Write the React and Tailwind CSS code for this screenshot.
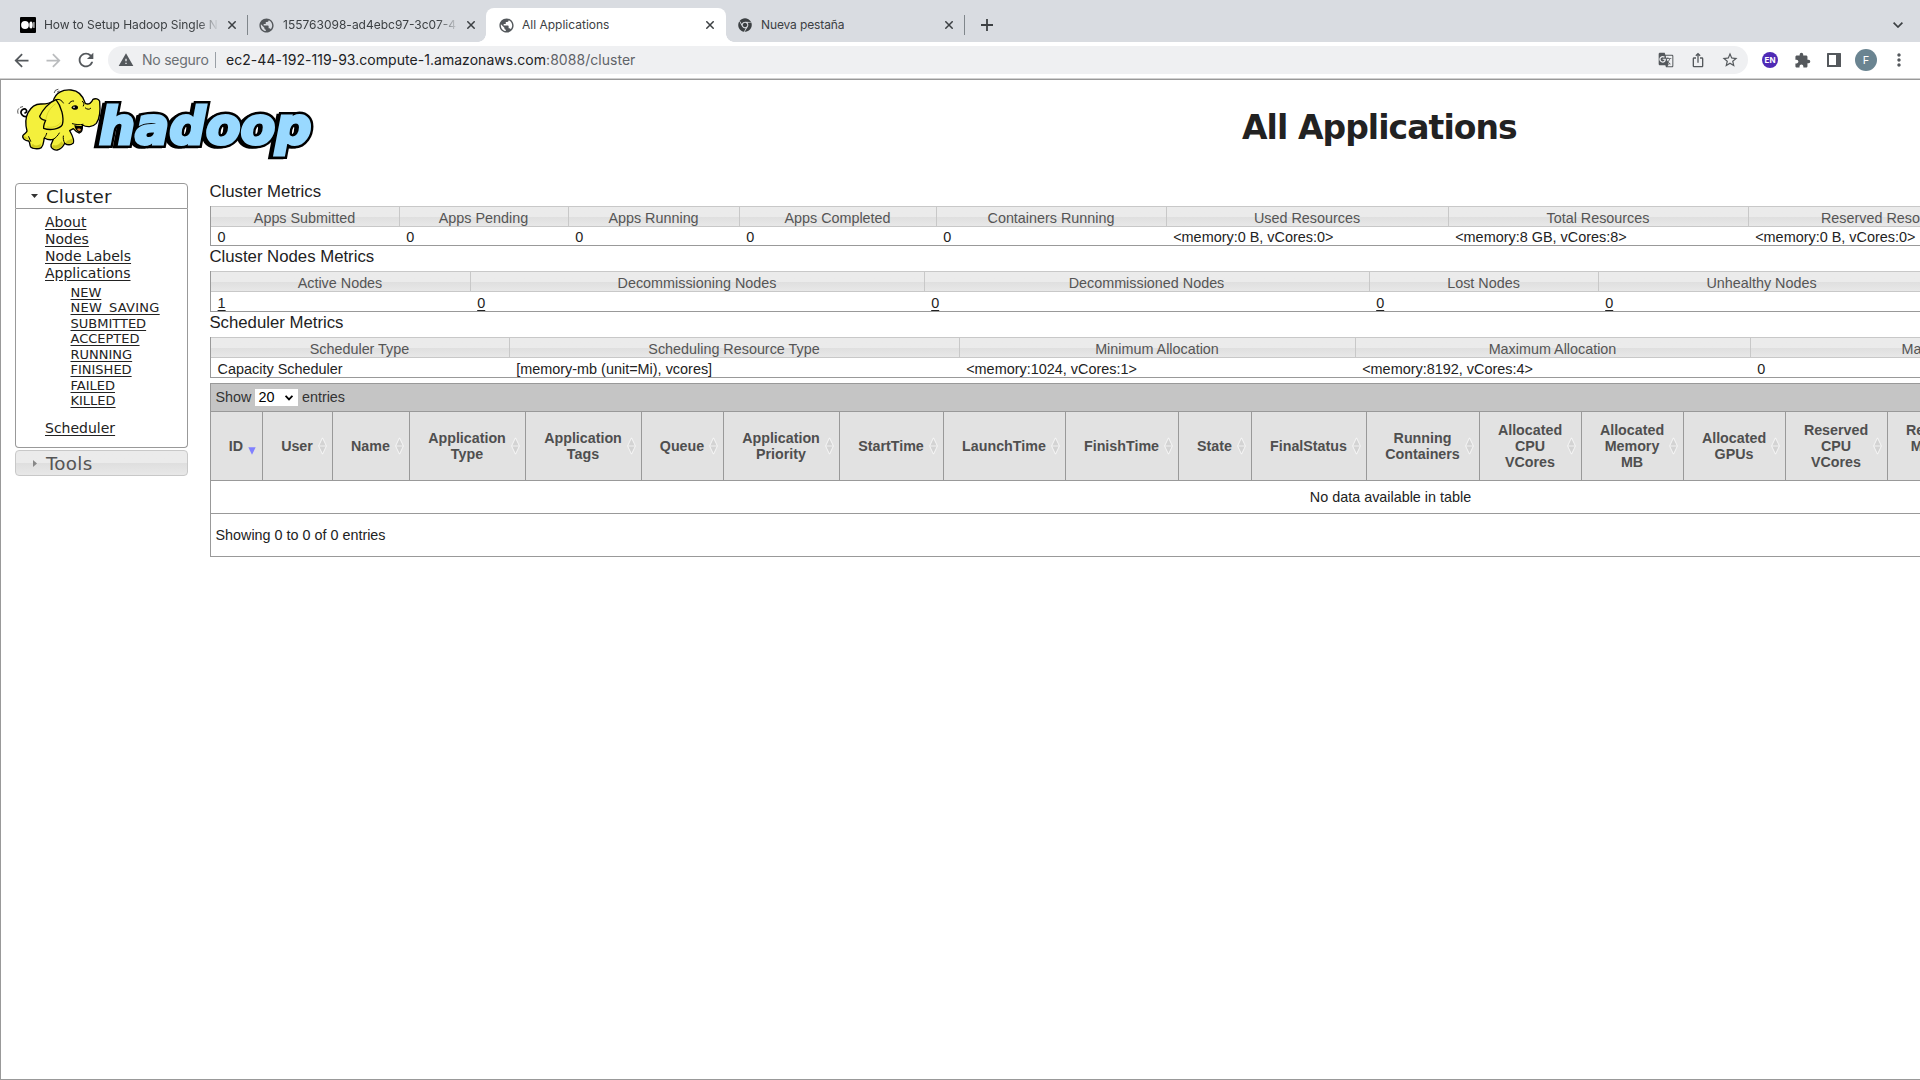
import React from "react";
import {
  MdExtension,
  MdStarBorder,
  MdWarning,
  MdRefresh,
  MdArrowBack,
  MdArrowForward,
  MdPublic,
  MdMoreVert,
  MdOutlineIosShare,
  MdGTranslate,
} from "react-icons/md";
import { FaChrome } from "react-icons/fa";

const CloseIcon = ({ className }) => (
  <svg className={className} width="8" height="8" viewBox="0 0 8 8" fill="none" stroke="#3c4043" strokeWidth="1.5">
    <path d="M0.3 0.3L7.7 7.7M7.7 0.3L0.3 7.7" />
  </svg>
);

const MediumIcon = () => (
  <svg width="16" height="16" viewBox="0 0 16 16">
    <rect width="16" height="16" rx="1" fill="#000" />
    <circle cx="5" cy="8" r="3.9" fill="#fff" />
    <ellipse cx="11" cy="8" rx="1.7" ry="3.5" fill="#fff" />
    <rect x="13.3" y="5" width="1.2" height="6" rx="0.6" fill="#ddd" />
  </svg>
);

const tabText = "h-5 whitespace-nowrap overflow-hidden text-[12px] leading-5 text-[#3c4043]";
const fade = "[mask-image:linear-gradient(to_right,black_88%,transparent)]";

function TabStrip() {
  return (
    <div className="flex h-[42px] bg-[#d9dce1] pt-2">
      <div className="flex h-[34px] w-[247px] items-center pl-5">
        <MediumIcon />
        <span className={`ml-2 w-[175px] ${tabText} ${fade} tracking-[-0.06px]`}>How to Setup Hadoop Single N</span>
        <CloseIcon className="ml-auto mr-[11px]" />
      </div>
      <div className="mt-[7px] h-5 w-px bg-[#80868b]" />
      <div className="flex h-[34px] w-[238px] items-center pl-[10px]">
        <MdPublic className="size-[17px] text-[#54585c]" />
        <span className={`ml-2 w-[176px] ${tabText} ${fade}`}>155763098-ad4ebc97-3c07-4</span>
        <CloseIcon className="ml-auto mr-[11px]" />
      </div>
      <div className="relative flex h-[34px] w-[240px] items-center rounded-t-lg bg-white pl-[12px]">
        <div className="absolute -left-2 bottom-0 size-2 bg-[radial-gradient(circle_at_0_0,#d9dce1_7.5px,white_8px)]" />
        <div className="absolute -right-2 bottom-0 size-2 bg-[radial-gradient(circle_at_100%_0,#d9dce1_7.5px,white_8px)]" />
        <MdPublic className="size-[17px] text-[#54585c]" />
        <span className={`ml-[7px] ${tabText}`}>All Applications</span>
        <CloseIcon className="ml-auto mr-[12px]" />
      </div>
      <div className="flex h-[34px] w-[238px] items-center pl-[12px]">
        <FaChrome className="size-[14px] text-[#3c4043]" />
        <span className={`ml-[9px] ${tabText} tracking-[-0.12px]`}>Nueva pestaña</span>
        <CloseIcon className="ml-auto mr-[11px]" />
      </div>
      <div className="mt-[7px] h-5 w-px bg-[#80868b]" />
      <svg className="ml-4 mt-[11px]" width="12" height="12" viewBox="0 0 12 12" stroke="#3c4043" strokeWidth="1.8">
        <path d="M6 0V12M0 6H12" />
      </svg>
      <svg className="ml-auto mr-[17px] mt-[14px]" width="10" height="6" viewBox="0 0 10 6" fill="none" stroke="#3c4043" strokeWidth="1.7">
        <path d="M0.6 0.6L5 5L9.4 0.6" />
      </svg>
    </div>
  );
}

function Toolbar() {
  return (
    <div className="flex h-9 items-center bg-white">
      <MdArrowBack className="ml-[11px] size-[21px] text-[#54585c]" />
      <MdArrowForward className="ml-[11px] size-[21px] text-[#babcbe]" />
      <MdRefresh className="ml-[11px] size-[22px] text-[#54585c]" />
      <div className="ml-[11px] flex h-7 w-[1640px] items-center rounded-full bg-[#eff0f2] pl-[10px] text-[14px] leading-5 tracking-[0.04px]">
        <MdWarning className="size-4 text-[#54585c]" />
        <span className="ml-[8px] w-[67px] whitespace-nowrap tracking-[-0.24px] text-[#6b6f73]">No seguro</span>
        <div className="ml-[6px] h-4 w-px bg-[#9aa0a6]" />
        <span className="ml-[10px] text-[#202124]">
          ec2-44-192-119-93.compute-1.amazonaws.com<span className="text-[#5f6368]">:8088/cluster</span>
        </span>
        <div className="ml-auto flex items-center text-[#54585c]">
          <MdGTranslate className="size-[16px]" />
          <MdOutlineIosShare className="ml-[16px] size-[16px]" />
          <MdStarBorder className="ml-[15px] mr-[9px] size-[18px]" />
        </div>
      </div>
      <div className="ml-[14px] grid size-4 place-items-center rounded-full bg-[#4f2ab5] text-[8px] font-bold leading-none text-white">EN</div>
      <MdExtension className="ml-[16px] size-[17px] text-[#54585c]" />
      <svg className="ml-[16px]" width="14" height="14" viewBox="0 0 14 14">
        <rect width="14" height="14" rx="0.5" fill="#54585c" />
        <rect x="2" y="2" width="7" height="10" fill="#fff" />
      </svg>
      <div className="ml-[14px] grid size-[22px] place-items-center rounded-full bg-[#6a8491] text-[11px] leading-none text-white">F</div>
      <MdMoreVert className="ml-[12px] size-5 text-[#54585c]" />
    </div>
  );
}

function HadoopLogo() {
  const word = {
    textLength: 638,
    lengthAdjust: "spacingAndGlyphs",
    fontSize: 157,
    fontWeight: 700,
    fontStyle: "italic",
    fontFamily: '"DejaVu Sans", sans-serif',
    strokeLinejoin: "miter",
  };
  return (
    <svg className="block" width="320" height="85" viewBox="3 12 960 255">
      <text x="288" y="206" fill="#000" stroke="#000" strokeWidth="20" {...word}>hadoop</text>
      <text x="297" y="205" fill="#000" stroke="#000" strokeWidth="24" {...word}>hadoop</text>
      <text x="297" y="205" fill="#99d9ff" stroke="#99d9ff" strokeWidth="9" {...word}>hadoop</text>
      <g stroke="#000" strokeWidth="4" strokeLinejoin="round" strokeLinecap="round">
        <path fill="none" strokeWidth="5" d="M84 121C68 126 57 110 67 101C77 95 86 106 75 111" />
        <path fill="none" strokeWidth="2" d="M54 112C52 106 53 101 56 98M61 94L68 92M163 50L166 43L174 40M172 48L177 45" />
        <path
          fill="#f4f03c"
          d="M160 75C166 50 188 40 213 42C237 44 250 62 256 82C266 88 275 80 279 70C286 66 296 69 299 76C301 98 302 124 289 142C278 154 260 154 247 147C248 158 246 168 238 171C229 168 224 163 220 158L209 164C216 177 224 190 220 201C212 208 202 207 194 202C190 211 183 220 172 222C160 224 151 214 153 206L160 190C150 193 140 190 133 186C130 196 132 206 124 215C114 221 97 218 92 213C88 207 91 200 86 195C76 194 65 187 69 178C74 172 80 170 81 165C77 150 75 128 84 110C93 93 108 83 125 84C136 84 150 82 160 75Z"
        />
        <path fill="#cfc91f" stroke="none" d="M98 203C106 211 116 210 123 202L122 213C113 217 98 216 94 210ZM160 207C169 211 178 206 184 196L191 203C182 219 165 222 156 214ZM200 195L216 188C219 193 219 198 216 201C210 205 202 203 198 201ZM74 180L86 190C80 191 73 188 72 183Z" />
        <path fill="none" strokeWidth="3" d="M160 190C168 185 174 178 178 171M194 202C190 194 189 186 190 180M92 196L86 182M133 186C137 180 139 176 140 172" />
        <path fill="#f4f03c" d="M168 71C145 80 127 103 119 121C121 128 129 132 137 133C133 142 130 150 131 157C150 164 179 160 187 146C193 124 184 91 168 71Z" />
        <path fill="none" stroke="#d8d226" strokeWidth="3" d="M166 84C151 94 140 112 138 130M182 140C175 152 155 156 142 153" />
        <path fill="none" strokeWidth="3" d="M168 71C177 68 185 72 190 81M207 83C210 77 216 74 221 75M247 76C252 79 253 84 250 90M256 96C262 101 268 101 272 97M217 143C228 146 240 147 249 145" />
        <path fill="#000" stroke="none" d="M214 95C219 86 228 86 234 92C235 98 231 102 225 101C220 101 217 99 214 95Z" />
        <circle cx="222" cy="94" r="2.5" fill="#fff" stroke="none" />
        <path fill="#000" stroke="none" d="M223 147C231 150 241 151 247 149C249 158 245 167 238 169C229 166 224 157 223 147Z" />
        <path fill="#e78a35" stroke="none" d="M231 159C236 156 242 158 243 161C240 167 235 166 231 159Z" />
      </g>
    </svg>
  );
}

const sideLink = "block w-fit text-[14px] leading-[17px] underline underline-offset-2";
const states = ["NEW", "NEW_SAVING", "SUBMITTED", "ACCEPTED", "RUNNING", "FINISHED", "FAILED", "KILLED"];

function Sidebar() {
  return (
    <div className="ml-[14px] mt-[3px] w-[173px] shrink-0 font-['DejaVu_Sans',sans-serif] text-[#222]">
      <div className="flex h-[26px] items-center rounded-t border border-[#999] text-[18.3px] leading-6">
        <svg className="ml-[15px]" width="7" height="4" viewBox="0 0 7 4">
          <path d="M0 0H7L3.5 4Z" fill="#333" />
        </svg>
        <span className="ml-[8px] mt-[2px] tracking-[0.1px]">Cluster</span>
      </div>
      <div className="h-[239px] rounded-b border border-t-0 border-[#999] pl-[29px] pt-[5px]">
        <a className={sideLink}>About</a>
        <a className={sideLink}>Nodes</a>
        <a className={sideLink}>Node Labels</a>
        <a className={sideLink}>Applications</a>
        <div className="ml-[25.5px] mt-[3px]">
          {states.map((s) => (
            <a
              key={s}
              className={`block w-fit text-[13px] leading-[15.45px] underline underline-offset-2 ${s === "NEW_SAVING" ? "tracking-[0.28px]" : ""}`}
            >
              {s}
            </a>
          ))}
        </div>
        <a className={`mt-[11px] ${sideLink}`}>Scheduler</a>
      </div>
      <div className="mt-[2px] flex h-[26px] items-center rounded border border-[#c8c8c8] bg-linear-to-b from-[#ebebeb] from-50% via-[#dfdfdf] via-52% to-[#e8e8e8] text-[18.3px] leading-6 text-[#555]">
        <svg className="ml-[17px]" width="4" height="7" viewBox="0 0 4 7">
          <path d="M0 0V7L4 3.5Z" fill="#888" />
        </svg>
        <span className="ml-[9px] mt-[2px] tracking-[0.3px]">Tools</span>
      </div>
    </div>
  );
}

function MetricsTable({ title, cols, tall }) {
  return (
    <section>
      <h3 className="-ml-[0.6px] h-[25px] pt-px text-[16.75px] leading-[19px]">{title}</h3>
      <div className="border-l border-[#999]">
        <div className="flex h-[21px] border-y border-[#c8c8c8] bg-linear-to-b from-[#ebebeb] from-50% via-[#dfdfdf] via-52% to-[#e8e8e8] text-center text-[14.37px] leading-[22px] text-[#555]">
          {cols.map(([name, , width], i) => (
            <div key={name} className={`shrink-0 whitespace-nowrap pr-px ${i ? "border-l border-[#c8c8c8]" : ""}`} style={{ width }}>
              {name}
            </div>
          ))}
        </div>
        <div className={`flex border-b border-[#999] text-[14.43px] ${tall ? "h-5 leading-[23px]" : "h-[19px] leading-5"}`}>
          {cols.map(([name, value, width, link], i) => (
            <div key={name} className={`shrink-0 whitespace-nowrap ${i ? "pl-[7.2px]" : "pl-[6.6px]"}`} style={{ width }}>
              <span className={link ? "underline underline-offset-2" : ""}>{value}</span>
            </div>
          ))}
        </div>
      </div>
    </section>
  );
}

const clusterMetrics = [
  ["Apps Submitted", "0", 188],
  ["Apps Pending", "0", 169],
  ["Apps Running", "0", 171],
  ["Apps Completed", "0", 197],
  ["Containers Running", "0", 230],
  ["Used Resources", "<memory:0 B, vCores:0>", 282],
  ["Total Resources", "<memory:8 GB, vCores:8>", 300],
  ["Reserved Resources", "<memory:0 B, vCores:0>", 280],
];

const nodeMetrics = [
  ["Active Nodes", "1", 259, true],
  ["Decommissioning Nodes", "0", 454, true],
  ["Decommissioned Nodes", "0", 445, true],
  ["Lost Nodes", "0", 229, true],
  ["Unhealthy Nodes", "0", 327, true],
];

const schedulerMetrics = [
  ["Scheduler Type", "Capacity Scheduler", 298],
  ["Scheduling Resource Type", "[memory-mb (unit=Mi), vcores]", 450],
  ["Minimum Allocation", "<memory:1024, vCores:1>", 396],
  ["Maximum Allocation", "<memory:8192, vCores:4>", 395],
  ["Maximum Cluster Application Priority", "0", 537],
];

const appColumns = [
  ["ID", 51],
  ["User", 70],
  ["Name", 77],
  ["Application Type", 116],
  ["Application Tags", 116],
  ["Queue", 82],
  ["Application Priority", 116],
  ["StartTime", 104],
  ["LaunchTime", 122],
  ["FinishTime", 113],
  ["State", 73],
  ["FinalStatus", 115],
  ["Running Containers", 113],
  ["Allocated CPU VCores", 102],
  ["Allocated Memory MB", 102],
  ["Allocated GPUs", 102],
  ["Reserved CPU VCores", 102],
  ["Reserved Memory MB", 102],
];

const SortIcon = () => (
  <svg className="absolute right-[5px] top-[25px]" width="9" height="18" viewBox="0 0 9 18">
    <path d="M4.5 0.8L8.4 8.6H0.6ZM4.5 17.2L8.4 9.4H0.6Z" fill="#d3d3d3" />
    <path d="M4.5 0.8L8.4 9L4.5 17.2L0.6 9Z" fill="none" stroke="#fff" strokeWidth="1" strokeOpacity="0.75" />
    <path d="M0.6 9H8.4" stroke="#eee" strokeWidth="0.8" />
  </svg>
);

const SortedIcon = () => (
  <svg className="absolute right-[6px] top-[35px]" width="8" height="8" viewBox="0 0 8 8">
    <path d="M0.3 0.3H7.7L4 7.8Z" fill="#8080ff" />
  </svg>
);

function AppsTable() {
  return (
    <div className="mt-[5px] w-[2361px] border border-[#999] text-[14.37px]">
      <div className="flex h-[28px] items-center border-b border-[#999] bg-[#c5c5c5] pl-[4.5px] text-[#333]">
        <span className="-mt-px leading-5">Show</span>
        <div className="ml-[4px] flex h-[17px] w-[43px] items-center bg-white pl-[3px] leading-[17px] text-black">
          20
          <svg className="ml-auto mr-[5px]" width="8" height="6" viewBox="0 0 8 6" fill="none" stroke="#000" strokeWidth="1.8">
            <path d="M0.6 0.8L4 4.4L7.4 0.8" />
          </svg>
        </div>
        <span className="-mt-px ml-[3.5px] leading-5">entries</span>
      </div>
      <div className="flex h-[69px] overflow-hidden border-b border-[#999] bg-[#e2e2e2] text-[14.28px] font-bold leading-4 text-[#4f4f4f]">
        {appColumns.map(([name, width], i) => (
          <div
            key={name}
            className={`relative flex shrink-0 items-center justify-center pr-px text-center ${i ? "border-l border-[#999]" : ""}`}
            style={{ width }}
          >
            <span className={name.includes(" ") ? "w-min" : "whitespace-nowrap"}>{name}</span>
            {i ? <SortIcon /> : <SortedIcon />}
          </div>
        ))}
        <div className="flex-1 border-l border-[#999]" />
      </div>
      <div className="h-[33px] border-b border-[#999] text-center leading-[33px]">No data available in table</div>
      <div className="h-[42px] pl-[4.5px] leading-[43px]">Showing 0 to 0 of 0 entries</div>
    </div>
  );
}

export default function App() {
  return (
    <div className="flex h-[1080px] w-[1920px] flex-col overflow-hidden bg-white font-['Inter',sans-serif]">
      <TabStrip />
      <Toolbar />
      <div className="h-px bg-[#d0d0d0]" />
      <main className="flex-1 overflow-hidden border-b border-l border-t border-[#999] font-['Liberation_Sans',Arial,sans-serif] text-[#222]">
        <div className="flex h-[100px] items-start">
          <HadoopLogo />
          <h1 className="ml-[921px] mt-[28px] whitespace-nowrap font-['DejaVu_Sans',sans-serif] text-[33px] font-bold leading-10 tracking-[-0.94px]">
            All Applications
          </h1>
        </div>
        <div className="flex items-start">
          <Sidebar />
          <div className="ml-[22px] mt-px w-[2361px] shrink-0">
            <MetricsTable title="Cluster Metrics" cols={clusterMetrics} />
            <MetricsTable title="Cluster Nodes Metrics" cols={nodeMetrics} tall />
            <MetricsTable title="Scheduler Metrics" cols={schedulerMetrics} tall />
            <AppsTable />
          </div>
        </div>
      </main>
    </div>
  );
}
